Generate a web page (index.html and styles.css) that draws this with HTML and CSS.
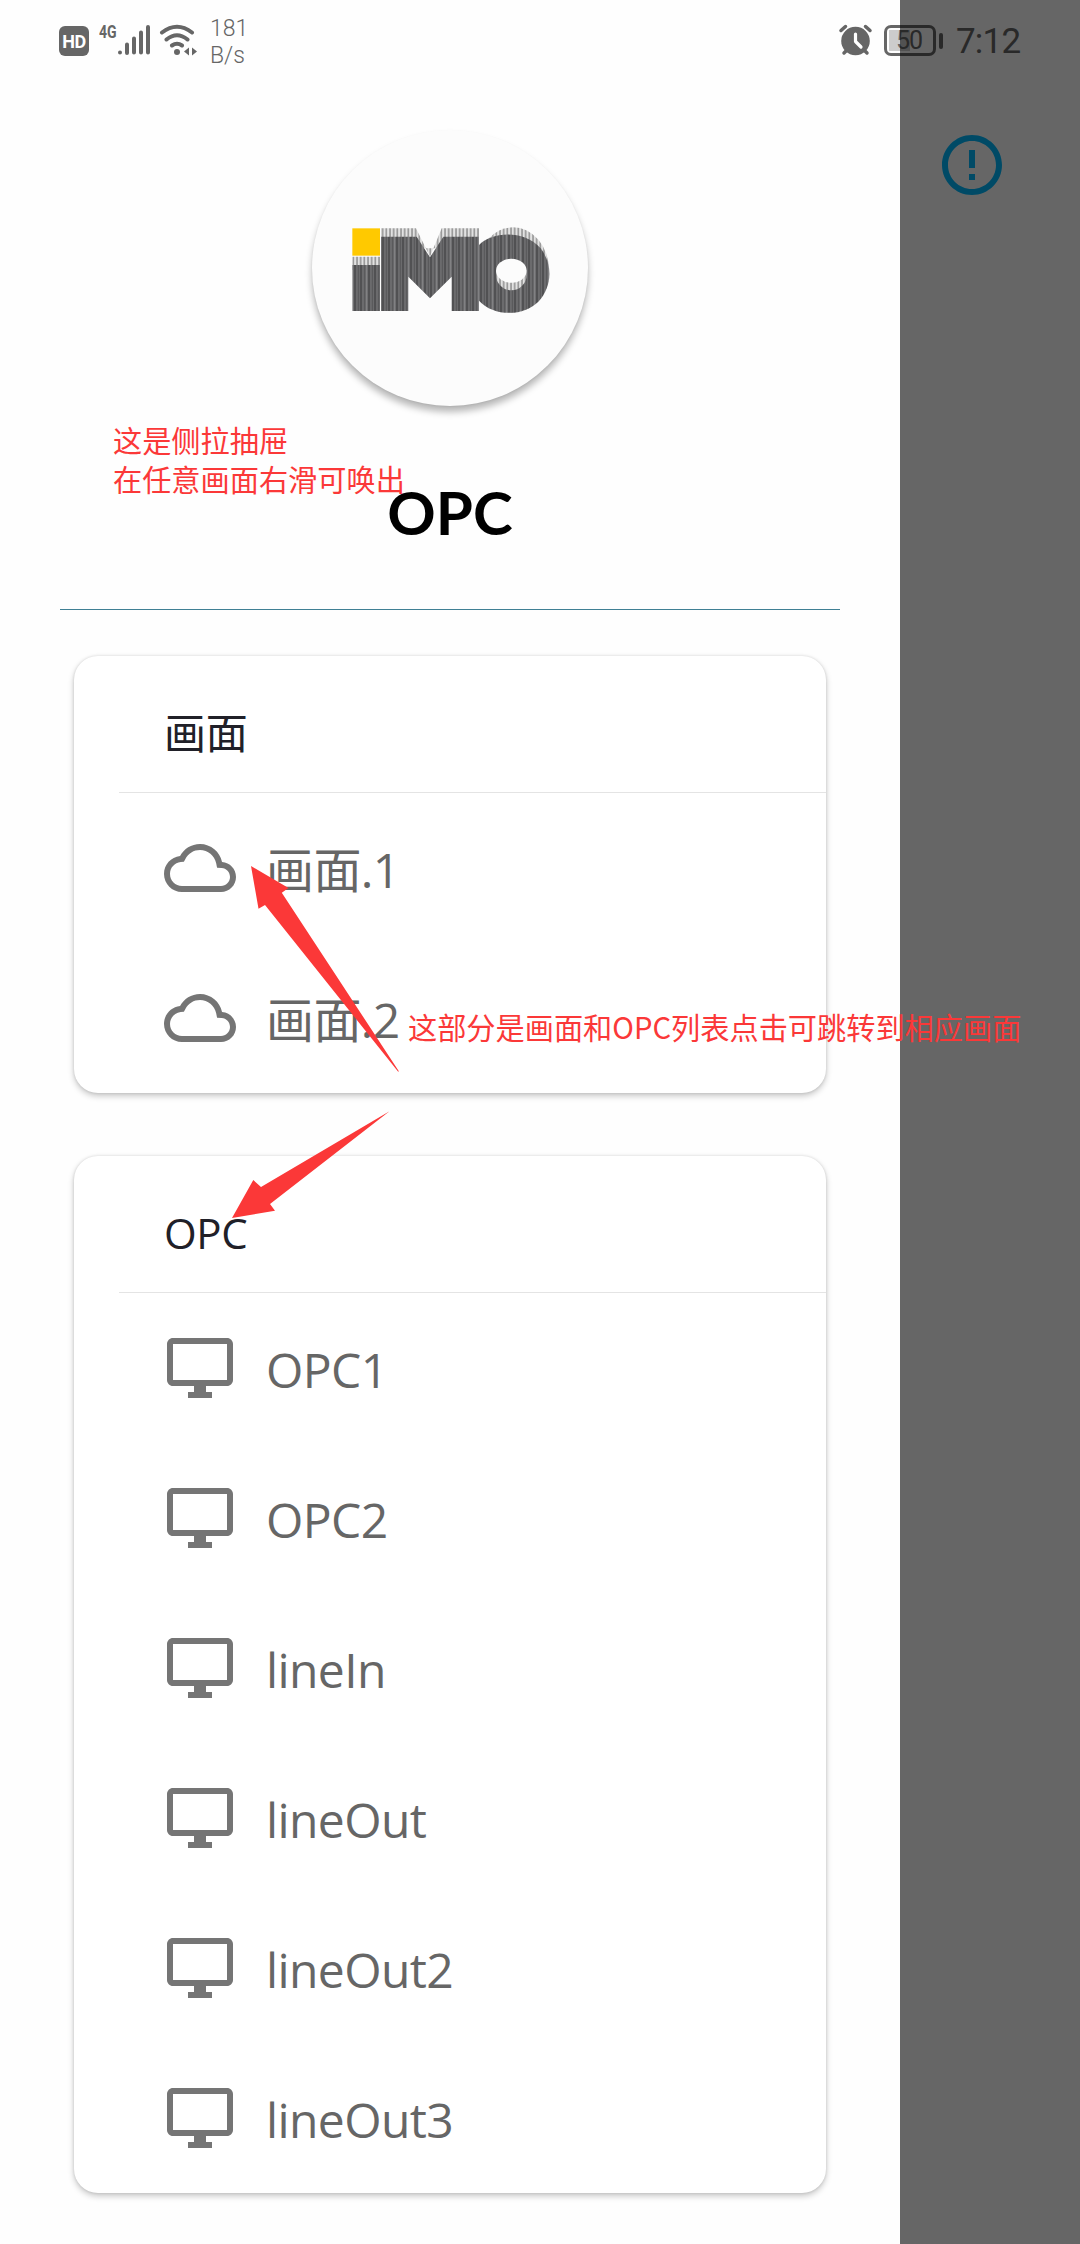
FILE: index.html
```html
<!DOCTYPE html>
<html lang="zh-CN">
<head>
<meta charset="utf-8">
<title>OPC</title>
<link rel="stylesheet" href="styles.css">
</head>
<body>
<svg class="symbols" width="0" height="0" aria-hidden="true">
  <symbol id="cloud" viewBox="0 0 24 24"><path d="M19.35 10.04C18.67 6.59 15.64 4 12 4 9.11 4 6.6 5.64 5.35 8.04 2.34 8.36 0 10.91 0 14c0 3.31 2.69 6 6 6h13c2.76 0 5-2.24 5-5 0-2.64-2.05-4.78-4.65-4.96zM19 18H6c-2.21 0-4-1.79-4-4 0-2.05 1.53-3.76 3.56-3.97l1.07-.11.5-.95C8.08 7.14 9.94 6 12 6c2.62 0 4.88 1.86 5.39 4.43l.3 1.5 1.53.11c1.56.1 2.78 1.41 2.78 2.96 0 1.65-1.35 3-3 3z"/></symbol>
  <symbol id="desktop" viewBox="0 0 24 24"><path d="M21 2H3c-1.1 0-2 .9-2 2v12c0 1.1.9 2 2 2h7v2H8v2h8v-2h-2v-2h7c1.1 0 2-.9 2-2V4c0-1.1-.9-2-2-2zm0 14H3V4h18v12z"/></symbol>
</svg>
<div class="screen">
  <aside class="drawer">
    <div class="avatar">
      <svg viewBox="66 30 828 828" width="276" height="276" role="img" aria-label="iMO">
        <defs>
          <pattern id="stripes" width="42" height="20" patternUnits="userSpaceOnUse">
            <rect width="42" height="20" fill="#6b6b6d"/>
            <path d="M3 0v20M27 0v20" stroke="#444446" stroke-width="4"/>
            <path d="M14 0v20M37 0v20" stroke="#565658" stroke-width="3"/>
            <path d="M20 0v20" stroke="#858587" stroke-width="3"/>
          </pattern>
          <pattern id="fringe" width="11" height="20" patternUnits="userSpaceOnUse">
            <rect width="11" height="20" fill="#e2e2e2"/>
            <path d="M3 0v20" stroke="#858585" stroke-width="4"/>
          </pattern>
        </defs>
        <g fill="url(#fringe)">
          <path d="M187 410h83v40h-83zM273 325h105l42 85 35-85h112v60H273z"/>
          <ellipse cx="669" cy="450" rx="108" ry="128"/>
        </g>
        <g fill="url(#stripes)">
          <path d="M187 435h83v138h-83zM273 350h107l40 62 40-62h107v223h-82V470l-65 65-65-65v103h-82z"/>
          <path d="M567 375C600 337 700 325 752 385C790 435 786 500 745 545C700 590 610 590 567 542z"/>
        </g>
        <ellipse cx="664" cy="464" rx="46" ry="47" fill="url(#fringe)"/>
        <ellipse cx="664" cy="452" rx="46" ry="36" fill="#fcfcfc"/>
        <path d="M187 325h83v82h-83z" fill="#ffc900"/>
      </svg>
    </div>
    <h1 class="name">OPC</h1>
    <hr class="rule">
    <section class="card">
      <h2 class="card-title">画面</h2>
      <ul class="list">
        <li class="item"><svg class="icon"><use href="#cloud"/></svg><span class="label">画面.1</span></li>
        <li class="item"><svg class="icon"><use href="#cloud"/></svg><span class="label">画面.2</span></li>
      </ul>
    </section>
    <section class="card">
      <h2 class="card-title">OPC</h2>
      <ul class="list">
        <li class="item"><svg class="icon"><use href="#desktop"/></svg><span class="label">OPC1</span></li>
        <li class="item"><svg class="icon"><use href="#desktop"/></svg><span class="label">OPC2</span></li>
        <li class="item"><svg class="icon"><use href="#desktop"/></svg><span class="label">lineIn</span></li>
        <li class="item"><svg class="icon"><use href="#desktop"/></svg><span class="label">lineOut</span></li>
        <li class="item"><svg class="icon"><use href="#desktop"/></svg><span class="label">lineOut2</span></li>
        <li class="item"><svg class="icon"><use href="#desktop"/></svg><span class="label">lineOut3</span></li>
      </ul>
    </section>
  </aside>
  <main class="page">
    <svg class="info" viewBox="0 0 24 24" width="72" height="72"><path d="M11 15h2v2h-2zm0-8h2v6h-2zm.99-5C6.47 2 2 6.48 2 12s4.47 10 9.99 10C17.52 22 22 17.52 22 12S17.52 2 11.99 2zM12 20c-4.42 0-8-3.58-8-8s3.58-8 8-8 8 3.58 8 8-3.58 8-8 8z"/></svg>
  </main>

  <header class="status">
    <span class="hd">HD</span>
    <span class="network">4G</span>
    <svg class="signal" viewBox="0 0 34 32" width="34" height="32" stroke="#666" stroke-width="4" stroke-linecap="round"><path d="M3 28.5v.01M10 20.5v8.500M17 14.500v14M24 8.500v20M31 3v25.500"/></svg>
    <svg class="wifi" viewBox="0 0 40 32" width="40" height="32" fill="none" stroke="#666" stroke-width="4" stroke-linecap="round">
      <path d="M4 8.500Q19 -3 34 8.500M8.500 15.500Q19 7 29.500 15.500M14 21.500Q19 18 24 21.500"/>
      <circle cx="19" cy="28" r="3" fill="#666" stroke="none"/>
      <path d="M31 23.500v8l-5-4zM34 23.500v8l5-4z" fill="#666" stroke="none"/>
    </svg>
    <span class="speed">181<br>B/s</span>
    <svg class="alarm" viewBox="0 0 36 32" width="36" height="32">
      <path d="M3 6.500L7.500 2.500M32 6.500L27.500 2.500M6 29l4-4M29 29l-4-4" stroke="#666" stroke-width="3.500" stroke-linecap="round"/>
      <circle cx="17.500" cy="17" r="14.300" fill="#666"/>
      <path d="M17.500 10v7.500l5.500 5.500" fill="none" stroke="#fff" stroke-width="3.200" stroke-linecap="round" stroke-linejoin="round"/>
    </svg>
    <span class="battery"><span class="level">50</span></span>
    <span class="time">7:12</span>
  </header>
  <div class="scrim"></div>

  <p class="note note-drawer">这是侧拉抽屉<br>在任意画面右滑可唤出</p>
  <p class="note note-list">这部分是画面和OPC列表点击可跳转到相应画面</p>
  <svg class="arrows" viewBox="0 0 170 370" width="170" height="370" fill="#fb3838">
    <path d="M11 16l37.500 22-6.700 4.700L159 221.500h-1L25 55l-6.500 3.700z"/>
    <path d="M-8 368l21.300-38 7.700 7 128.500-75.700L30 354l5 6.700z"/>
  </svg>
</div>
</body>
</html>
```
FILE: styles.css
```css
* { box-sizing: border-box; }

body {
  margin: 0;
  font-family: "Open Sans", "Noto Sans CJK SC", sans-serif;
}

.symbols { position: absolute; }

.screen {
  position: relative;
  display: flex;
  width: 1080px;
  height: 2244px;
  overflow: hidden;
  background: #fff;
}

.drawer {
  display: flex;
  flex-direction: column;
  width: 900px;
  padding: 130px 60px 0;
  background: #fefefe;
}

.drawer > * { flex-shrink: 0; }

.avatar {
  align-self: center;
  width: 276px;
  height: 276px;
  border-radius: 50%;
  background: #fcfcfc;
  box-shadow: 0 6px 7px rgba(0, 0, 0, .28), 0 1px 2px rgba(0, 0, 0, .06);
}

.avatar svg { display: block; }

.name {
  margin: 66px 0 0;
  font-family: Lato, sans-serif;
  font-size: 60px;
  font-weight: 700;
  line-height: 80px;
  text-align: center;
  color: #000;
}

.rule {
  width: 780px;
  height: 1px;
  margin: 57px 0 46px;
  border: 0;
  background: #3f7f94;
}

.card {
  margin: 0 14px 63px;
  border-radius: 24px;
  background: #fff;
  box-shadow: 0 3px 6px rgba(0, 0, 0, .22), 0 0 3px rgba(0, 0, 0, .12);
}

.card:last-child { margin-bottom: 0; }

.card-title {
  height: 137px;
  margin: 0 0 0 45px;
  padding: 47px 0 0 45px;
  border-bottom: 1px solid #e4e4e4;
  font-size: 42px;
  font-weight: 400;
  line-height: 60px;
  letter-spacing: -.3px;
  color: #202028;
}

.list {
  margin: 0;
  padding: 0;
  list-style: none;
}

.item {
  display: flex;
  align-items: center;
  gap: 30px;
  height: 150px;
  padding-left: 90px;
}

.icon {
  width: 72px;
  height: 72px;
  fill: #757575;
}

.label {
  padding-top: 4px;
  font-size: 48px;
  line-height: 64px;
  letter-spacing: -.6px;
  color: #666;
}

.page {
  width: 180px;
  padding: 129px 0 0 36px;
}

.info { display: block; fill: #00baff; }

.status {
  position: absolute;
  inset: 0 0 auto;
  display: flex;
  align-items: flex-start;
  height: 82px;
  padding: 24px 0 0 59px;
  font-family: Roboto, sans-serif;
  color: #666;
}

.hd {
  width: 30px;
  height: 30px;
  margin-top: 2px;
  border-radius: 6px;
  background: #666;
  color: #fff;
  font-size: 18px;
  font-weight: 700;
  line-height: 31px;
  letter-spacing: -.5px;
  text-align: center;
}

.network {
  width: 18px;
  margin-left: 10px;
  font-size: 18px;
  font-weight: 700;
  line-height: 16px;
  transform: scaleX(.78);
  transform-origin: left;
}

.wifi { margin-left: 7px; }

.speed {
  margin: -9px 0 0 12px;
  font-size: 23px;
  font-weight: 300;
  line-height: 27px;
}

.alarm { margin-left: auto; }

.battery {
  position: relative;
  width: 52px;
  height: 31px;
  margin: 1px 0 0 10px;
  border: 3px solid #666;
  border-radius: 7px;
  padding: 2px;
}

.battery::after {
  content: "";
  position: absolute;
  top: 5px;
  right: -10px;
  width: 4px;
  height: 16px;
  border-radius: 2px;
  background: #666;
}

.level {
  display: block;
  height: 21px;
  background: linear-gradient(90deg, #ccc 50%, transparent 50%);
  font-size: 25px;
  line-height: 22px;
  letter-spacing: -1px;
  text-indent: -2px;
  text-align: center;
}

.time {
  width: 124px;
  margin-left: 20px;
  font-size: 35px;
  line-height: 36px;
  letter-spacing: -.8px;
}

.scrim {
  position: absolute;
  inset: 0 0 0 900px;
  background: rgba(0, 0, 0, .6);
}

.note {
  position: absolute;
  margin: 0;
  font-family: "Noto Sans CJK SC", sans-serif;
  font-size: 29.2px;
  line-height: 39px;
  white-space: nowrap;
  color: #fb3838;
}

.note-drawer { left: 113px; top: 420px; }

.note-list { left: 408px; top: 1007px; }

.arrows {
  position: absolute;
  left: 240px;
  top: 850px;
  overflow: visible;
}
```
